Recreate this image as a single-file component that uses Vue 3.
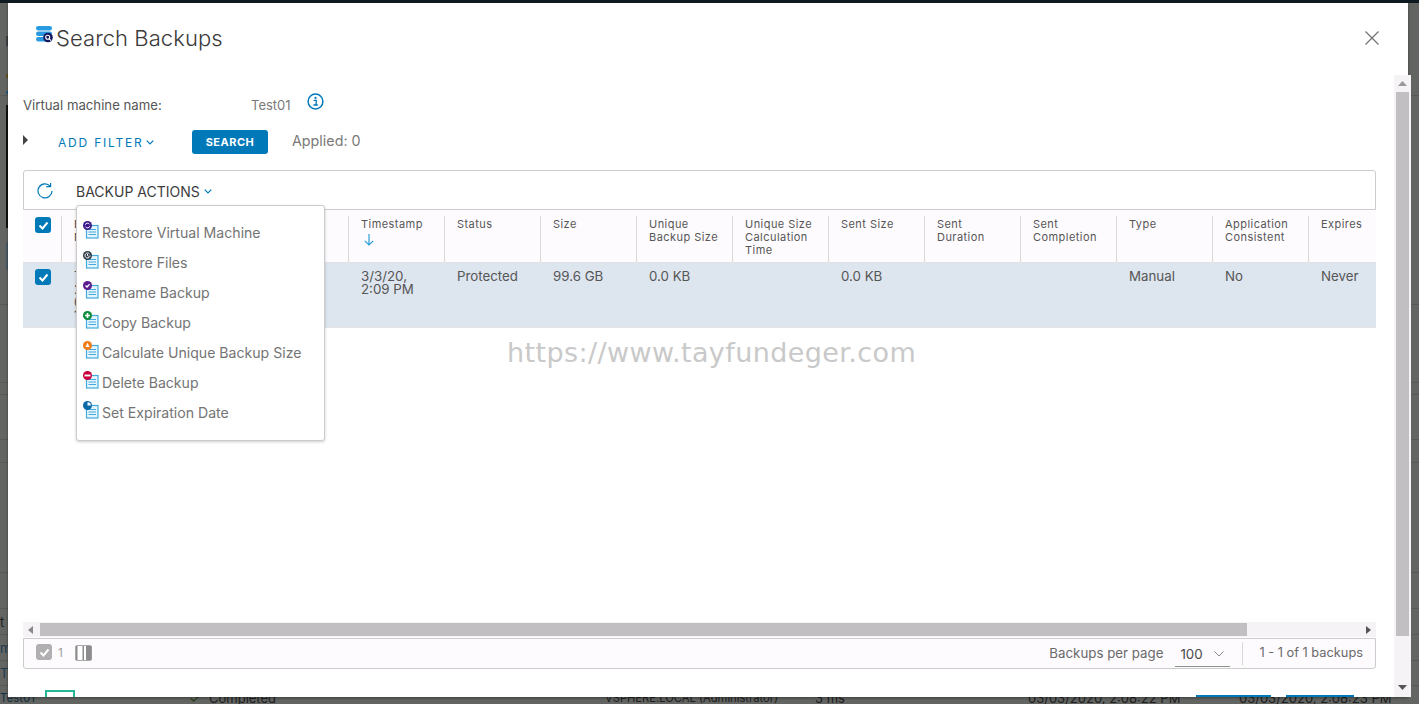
<script setup>
const headers = [
  { key: 'ts', lines: ['Timestamp'], sort: true },
  { key: 'status', lines: ['Status'] },
  { key: 'size', lines: ['Size'] },
  { key: 'unique', lines: ['Unique', 'Backup Size'] },
  { key: 'calc', lines: ['Unique Size', 'Calculation', 'Time'] },
  { key: 'sent', lines: ['Sent Size'] },
  { key: 'dur', lines: ['Sent', 'Duration'] },
  { key: 'comp', lines: ['Sent', 'Completion'] },
  { key: 'type', lines: ['Type'] },
  { key: 'app', lines: ['Application', 'Consistent'] },
  { key: 'exp', lines: ['Expires'] }
]
const cells = [['3/3/20,', '2:09 PM'], ['Protected'], ['99.6 GB'], ['0.0 KB'], [], ['0.0 KB'], [], [], ['Manual'], ['No'], ['Never']]
const actions = [
  { label: 'Restore Virtual Machine', color: '#3c1a8c', kind: 'sync' },
  { label: 'Restore Files', color: '#2f3b46', kind: 'clock' },
  { label: 'Rename Backup', color: '#5b1a8e', kind: 'check' },
  { label: 'Copy Backup', color: '#0a8a3c', kind: 'plus' },
  { label: 'Calculate Unique Backup Size', color: '#f07d1a', kind: 'up' },
  { label: 'Delete Backup', color: '#c8003c', kind: 'minus' },
  { label: 'Set Expiration Date', color: '#0a6aa8', kind: 'pie' }
]
const bgLines = [95, 304, 382, 394, 439, 462, 572, 608, 634, 660, 685]
const bgLineStyle = (y) => ({ top: y + 'px' })
</script>

<template>
  <div class="page">
    <div class="topstrip"></div>
    <div class="backdrop">
      <i v-for="y in bgLines" :key="y" class="bg-line" :style="bgLineStyle(y)"></i>
      <i class="bg-black"></i>
      <i class="bg-blue"></i>
      <i class="bg-amber"></i>
      <i class="bg-mark"></i>
      <i class="bg-steel"></i>
      <span class="bg-t bg-t1">t</span>
      <span class="bg-t bg-t2">m</span>
      <span class="bg-t bg-t3">Te</span>
      <span class="bg-t bg-a">Test01</span>
      <span class="bg-t bg-b">✓</span>
      <span class="bg-t bg-c">Completed</span>
      <span class="bg-t bg-d">VSPHERE.LOCAL (Administrator)</span>
      <span class="bg-t bg-e">3 ms</span>
      <span class="bg-t bg-f">03/03/2020, 2:08:22 PM</span>
      <span class="bg-t bg-g">03/03/2020, 2:08:23 PM</span>
    </div>

    <div class="modal">
      <header class="head">
        <svg class="logo" width="17" height="17" viewBox="0 0 17 17">
          <rect x="0" y="0" width="16" height="4.500" rx="2.200" fill="#2a9be0" />
          <rect x="0" y="5.500" width="16" height="4.500" rx="2.200" fill="#2a9be0" />
          <rect x="0" y="11" width="16" height="4.500" rx="2.200" fill="#2a9be0" />
          <circle cx="12" cy="11.500" r="4.800" fill="#14185e" />
          <circle cx="11.700" cy="11.200" r="2" fill="none" stroke="#fff" stroke-width="1.100" />
          <path d="M13 12.600l2 2" stroke="#fff" stroke-width="1.100" />
        </svg>
        <h1 class="title">Search Backups</h1>
        <svg class="close" width="16" height="16" viewBox="0 0 16 16">
          <path d="M1.500 1.500l13 13M14.500 1.500l-13 13" stroke="#747474" stroke-width="1.300" fill="none" />
        </svg>
      </header>

      <div class="body">
        <div class="vm-row">
          <span class="vm-label">Virtual machine name:</span>
          <span class="vm-value">Test01</span>
          <svg class="info" width="17" height="17" viewBox="0 0 17 17">
            <circle cx="8.500" cy="8.500" r="7.400" fill="none" stroke="#0079b8" stroke-width="1.500" />
            <circle cx="8.500" cy="4.900" r="1.100" fill="#0079b8" />
            <path d="M6.600 7.300h2.600v4.600h1.400M6.400 12h4.400" stroke="#0079b8" stroke-width="1.300" fill="none" />
          </svg>
        </div>

        <div class="filter-row">
          <span class="caret"></span>
          <span class="add-filter">ADD FILTER</span>
          <svg class="chev" width="8" height="5" viewBox="0 0 8 5"><path d="M.7.7L4 4l3.300-3.300" stroke="#0079b8" stroke-width="1.200" fill="none" /></svg>
          <button class="search">SEARCH</button>
          <span class="applied">Applied: 0</span>
        </div>

        <div class="toolbar">
          <svg class="refresh" width="16" height="16" viewBox="0 0 16 16">
            <path d="M13.200 3.200A7 7 0 1 0 15 8" fill="none" stroke="#0079b8" stroke-width="1.200" />
            <path d="M9.200 3.600h4.400V0" fill="none" stroke="#0079b8" stroke-width="1.200" />
          </svg>
          <span class="actions-label">BACKUP ACTIONS</span>
          <svg class="chev-b" width="8" height="5" viewBox="0 0 8 5"><path d="M.7.7L4 4l3.300-3.300" stroke="#0079b8" stroke-width="1.200" fill="none" /></svg>

          <ul class="menu">
            <li v-for="a in actions" :key="a.label" class="menu-item">
              <svg class="mi" width="16" height="20" viewBox="0 0 16 20">
                <rect x="3.500" y="4.500" width="11.500" height="12.500" fill="#e6f4fb" stroke="#42aade" stroke-width="1.200" />
                <path d="M5.500 8.500h7.500M5.500 11h7.500M5.500 13.500h7.500" stroke="#42aade" stroke-width="1" />
                <circle cx="4.500" cy="4.500" r="4.500" :fill="a.color" />
                <path v-if="a.kind === 'check'" d="M2.500 4.500l1.500 1.500 2.600-2.800" stroke="#fff" stroke-width="1.300" fill="none" />
                <path v-else-if="a.kind === 'plus'" d="M4.500 2v5M2 4.500h5" stroke="#fff" stroke-width="1.700" fill="none" />
                <path v-else-if="a.kind === 'minus'" d="M1.500 4.500h6" stroke="#fff" stroke-width="1.900" fill="none" />
                <path v-else-if="a.kind === 'up'" d="M4.500 1.800l2 4.200h-4z" fill="#fff" />
                <path v-else-if="a.kind === 'pie'" d="M4.500 4.500V1.200a3.300 3.300 0 0 1 3.300 3.300z" fill="#fff" />
                <path v-else-if="a.kind === 'clock'" d="M6.500 3a2.500 2.500 0 1 0 .5 1.500M4.500 3v1.700l1.200.6" stroke="#fff" stroke-width="1" fill="none" />
                <path v-else d="M2.200 3.800a2.400 2.400 0 0 1 4.400-.4M6.800 5.200a2.400 2.400 0 0 1-4.400.4" stroke="#fff" stroke-width="1" fill="none" />
              </svg>
              <span>{{ a.label }}</span>
            </li>
          </ul>
        </div>

        <div class="grid head-row">
          <div class="hc check-c"><span class="box"><svg width="11" height="9" viewBox="0 0 11 9"><path d="M1.500 4.500l3 3 5-6" stroke="#fff" stroke-width="2" fill="none" /></svg></span></div>
          <div class="hc"><div>B</div><div>N</div></div>
          <div v-for="h in headers" :key="h.key" class="hc">
            <div v-for="l in h.lines" :key="l">{{ l }}</div>
            <svg v-if="h.sort" class="sort" width="12" height="13" viewBox="0 0 12 13"><path d="M6 1v11M1.800 7.800L6 12l4.200-4.200" stroke="#2b9fd9" stroke-width="1.200" fill="none" /></svg>
          </div>
        </div>
        <div class="grid data-row">
          <div class="dc check-c"><span class="box"><svg width="11" height="9" viewBox="0 0 11 9"><path d="M1.500 4.500l3 3 5-6" stroke="#fff" stroke-width="2" fill="none" /></svg></span></div>
          <div class="dc"><div>T</div><div>2</div><div>0</div><div>1</div></div>
          <div v-for="(c, i) in cells" :key="i" class="dc"><div v-for="l in c" :key="l">{{ l }}</div></div>
        </div>

        <div class="spacer"></div>

        <div class="hscroll">
          <svg width="6" height="8" viewBox="0 0 6 8" class="harrow-l"><path d="M5 0v8L0 4z" fill="#8a888a" /></svg>
          <div class="hthumb"></div>
          <svg width="6" height="8" viewBox="0 0 6 8" class="harrow-r"><path d="M0 0v8l5-4z" fill="#555" /></svg>
        </div>

        <footer class="foot">
          <span class="box gray"><svg width="11" height="9" viewBox="0 0 11 9"><path d="M1.500 4.500l3 3 5-6" stroke="#fff" stroke-width="2" fill="none" /></svg></span>
          <span class="count">1</span>
          <svg class="cols" width="17" height="16" viewBox="0 0 17 16">
            <rect x=".5" y=".5" width="16" height="15" rx="1.500" fill="#fff" stroke="#a8a8a8" />
            <rect x="1" y="1" width="1.500" height="14" fill="#8c8c8c" />
            <rect x="7.500" y="1" width="1.500" height="14" fill="#8c8c8c" />
            <rect x="11" y="1" width="5.500" height="14" fill="#8c8c8c" />
          </svg>
          <span class="per-page">Backups per page</span>
          <span class="select">100<svg width="10" height="6" viewBox="0 0 10 6"><path d="M.5.500L5 5 9.500.500" stroke="#8a8a8a" stroke-width="1" fill="none" /></svg></span>
          <span class="sep"></span>
          <span class="range">1 - 1 of 1 backups</span>
        </footer>
      </div>

      <div class="green-box"></div>
      <div class="blue-a"></div>
      <div class="blue-b"></div>
      <div class="watermark">https://www.tayfundeger.com</div>
    </div>

    <div class="vscroll">
      <svg width="9" height="5" viewBox="0 0 9 5"><path d="M0 5h9L4.500 0z" fill="#9a989a" /></svg>
      <div class="vthumb"></div>
      <svg class="vdown" width="9" height="5" viewBox="0 0 9 5"><path d="M0 0h9L4.500 5z" fill="#555" /></svg>
    </div>
  </div>
</template>

<style>
html, body { margin: 0; padding: 0; overflow: hidden; }
</style>

<style scoped>
.page {
  position: relative;
  width: 1419px;
  height: 704px;
  overflow: hidden;
  background: #636563;
  font-family: Inter, "Open Sans", sans-serif;
  color: #565656;
}
.topstrip { position: relative; z-index: 1; height: 3px; background: #0f1a20; }
.backdrop { position: absolute; inset: 0; }
.bg-line { position: absolute; left: 0; right: 0; height: 1px; background: #575957; }
.bg-black { position: absolute; left: 6px; top: 105px; width: 2px; height: 123px; background: #111; }
.bg-blue { position: absolute; left: 6px; top: 91px; width: 2px; height: 3px; background: #2a5a78; }
.bg-amber { position: absolute; left: 6px; top: 74px; width: 2px; height: 4px; background: #6a5428; }
.bg-mark { position: absolute; left: 6px; top: 36px; width: 2px; height: 10px; background: #3e4244; }
.bg-steel { position: absolute; left: 6px; top: 242px; width: 2px; height: 28px; background: #4a5a66; }
.bg-t {
  position: absolute;
  font-size: 13px;
  line-height: 14px;
  color: #202020;
  white-space: nowrap;
}
.bg-t1 { left: 0; top: 615px; }
.bg-t2 { left: 0; top: 641px; color: #1c3a4c; }
.bg-t3 { left: 0; top: 666px; color: #1c3a4c; }
.bg-a { left: 0; top: 691px; font-size: 11.500px; color: #12303f; }
.bg-b { left: 189px; top: 691px; color: #2b3d10; }
.bg-c { left: 209px; top: 691px; }
.bg-d { left: 605px; top: 691px; font-size: 11.200px; }
.bg-e { left: 815px; top: 691px; }
.bg-f { left: 1028px; top: 691px; }
.bg-g { left: 1239px; top: 691px; }

.modal {
  position: absolute;
  left: 8px;
  top: 3px;
  width: 1400px;
  height: 694px;
  background: #fff;
  display: flex;
  flex-direction: column;
  box-shadow: 0 1px 3px rgba(0, 0, 0, .4);
}
.head {
  height: 70px;
  flex: none;
  display: flex;
  align-items: center;
  padding: 0 28px 0 28px;
}
.logo { margin-top: -7px; margin-right: 3px; }
.title {
  margin: 0;
  font-size: 22px;
  font-weight: 300;
  color: #3a3a3a;
  letter-spacing: .06px;
  flex: 1;
}
.body {
  flex: 1;
  display: flex;
  flex-direction: column;
  padding: 0 32px 28px 15px;
  min-height: 0;
}
.vm-row {
  margin-top: 22px;
  height: 20px;
  display: flex;
  align-items: center;
  font-size: 13.200px;
  color: #565656;
}
.vm-label { width: 228px; }
.vm-value { width: 57px; font-size: 13px; color: #7a7a7a; }
.info { margin-top: -8px; margin-left: -1px; }
.filter-row {
  margin-top: 15px;
  height: 24px;
  display: flex;
  align-items: center;
}
.caret {
  width: 0;
  height: 0;
  border-left: 5px solid #444;
  border-top: 5.500px solid transparent;
  border-bottom: 5.500px solid transparent;
  margin-top: -4px;
  margin-right: 30px;
}
.add-filter {
  font-size: 12px;
  letter-spacing: 1.800px;
  color: #0079b8;
  width: 88px;
  margin-top: 1px;
  white-space: nowrap;
}
.chev { margin-right: 38px; }
.search {
  width: 76px;
  height: 24px;
  border: 0;
  border-radius: 3px;
  background: #0079b8;
  color: #fff;
  font: 700 11px Inter, sans-serif;
  letter-spacing: .5px;
  padding: 0;
  margin-right: 24px;
}
.applied { font-size: 14.300px; color: #7a7a7a; margin-top: -4px; }
.toolbar {
  position: relative;
  margin-top: 16px;
  height: 40px;
  box-sizing: border-box;
  border: 1px solid #ccc;
  border-radius: 3px 3px 0 0;
  display: flex;
  align-items: center;
  padding-left: 13px;
}
.refresh { margin-right: 23px; margin-top: 1px; }
.actions-label {
  font-size: 14px;
  color: #3d3d3d;
  width: 128px;
  margin-top: 3px;
  white-space: nowrap;
}
.chev-b { margin-top: 2px; }
.menu {
  position: absolute;
  z-index: 3;
  left: 52px;
  top: 34px;
  width: 249px;
  height: 236px;
  margin: 0;
  padding: 11px 0 0 6px;
  box-sizing: border-box;
  list-style: none;
  background: #fff;
  border: 1px solid #ccc;
  border-radius: 3px;
  box-shadow: 0 1px 3px rgba(0, 0, 0, .2);
}
.menu-item {
  height: 30px;
  display: flex;
  align-items: center;
  font-size: 14.100px;
  color: #747474;
  white-space: nowrap;
}
.mi { margin-right: 3px; margin-top: -2px; flex: none; }
.grid {
  display: grid;
  grid-template-columns: 38px 287px repeat(10, 96px) 68px;
}
.head-row {
  height: 53px;
  box-sizing: border-box;
  background: #fdfbfe;
  border-bottom: 1px solid #e2e2e2;
  padding-top: 6px;
  font-size: 11px;
  line-height: 13px;
  letter-spacing: .45px;
  color: #565656;
}
.hc {
  border-left: 1px solid #d8d8d8;
  padding: 2px 0 0 12px;
  height: 46px;
  box-sizing: border-box;
  white-space: nowrap;
  overflow: hidden;
}
.check-c { border-left: 0; padding: 1px 0 0 12px; }
.sort { display: block; margin: 2px 0 0 2px; }
.box {
  width: 16px;
  height: 16px;
  border-radius: 3px;
  background: #0079b8;
  display: flex;
  align-items: center;
  justify-content: center;
}
.box.gray { background: #b0b0b0; }
.data-row {
  height: 65px;
  background: #dde5ee;
  border-bottom: 1px solid #e4e4e4;
  box-sizing: border-box;
  font-size: 13.300px;
  line-height: 13px;
  color: #565656;
  padding-top: 6px;
}
.dc { padding: 1px 0 0 13px; white-space: nowrap; }
.data-row .check-c { padding: 0 0 0 12px; }
.spacer { flex: 1; }
.hscroll {
  position: relative;
  height: 15px;
  background: #f5f3f5;
  display: flex;
  align-items: center;
}
.hthumb { position: absolute; left: 17px; width: 1207px; top: 1px; height: 13px; background: #c1bfc1; }
.harrow-l { position: absolute; left: 5px; top: 4px; }
.harrow-r { position: absolute; right: 4px; top: 4px; }
.foot {
  margin-top: 1px;
  height: 31px;
  box-sizing: border-box;
  display: flex;
  align-items: center;
  background: #fdfbfe;
  border: 1px solid #ccc;
  border-radius: 0 0 3px 3px;
  padding-left: 12px;
  font-size: 13.300px;
  color: #6a6a6a;
}
.count { margin-left: 6px; font-size: 12px; color: #a0a0a0; width: 17px; margin-top: -3px; }
.foot .box { margin-top: -3px; }
.cols { margin-top: -1px; }
.per-page { margin-left: auto; margin-right: 12px; white-space: nowrap; margin-top: -1px; }
.select {
  width: 55px;
  height: 25px;
  box-sizing: border-box;
  padding-left: 5px;
  border-bottom: 1px solid #8f8f8f;
  display: flex;
  align-items: center;
  justify-content: space-between;
  padding-right: 6px;
  color: #4a4a4a;
  margin-top: 1px;
}
.sep { width: 1px; height: 23px; background: #d8d8d8; margin: 0 16px 0 12px; }
.range { font-size: 12.800px; margin-right: 12px; white-space: nowrap; margin-top: -3px; }
.green-box {
  position: absolute;
  left: 37px;
  top: 687px;
  width: 30px;
  height: 7px;
  box-sizing: border-box;
  border: 2px solid #25b795;
  border-bottom: 0;
}
.blue-a, .blue-b { position: absolute; top: 692px; height: 2px; background: #0079b8; }
.blue-a { left: 1188px; width: 75px; }
.blue-b { left: 1278px; width: 68px; }
.watermark {
  position: absolute;
  left: 499px;
  top: 332px;
  font-family: "DejaVu Sans", sans-serif;
  font-size: 27px;
  line-height: 36px;
  letter-spacing: .4px;
  color: #c9c9c9;
  white-space: nowrap;
}
.vscroll {
  position: absolute;
  left: 1394px;
  top: 75px;
  width: 17px;
  height: 622px;
  background: #f5f3f5;
  display: flex;
  flex-direction: column;
  align-items: center;
  padding-top: 6px;
  box-sizing: border-box;
}
.vthumb { position: absolute; left: 2px; top: 17px; width: 13px; height: 544px; background: #c1bfc1; }
.vdown { position: absolute; left: 4px; bottom: 7px; }
</style>
